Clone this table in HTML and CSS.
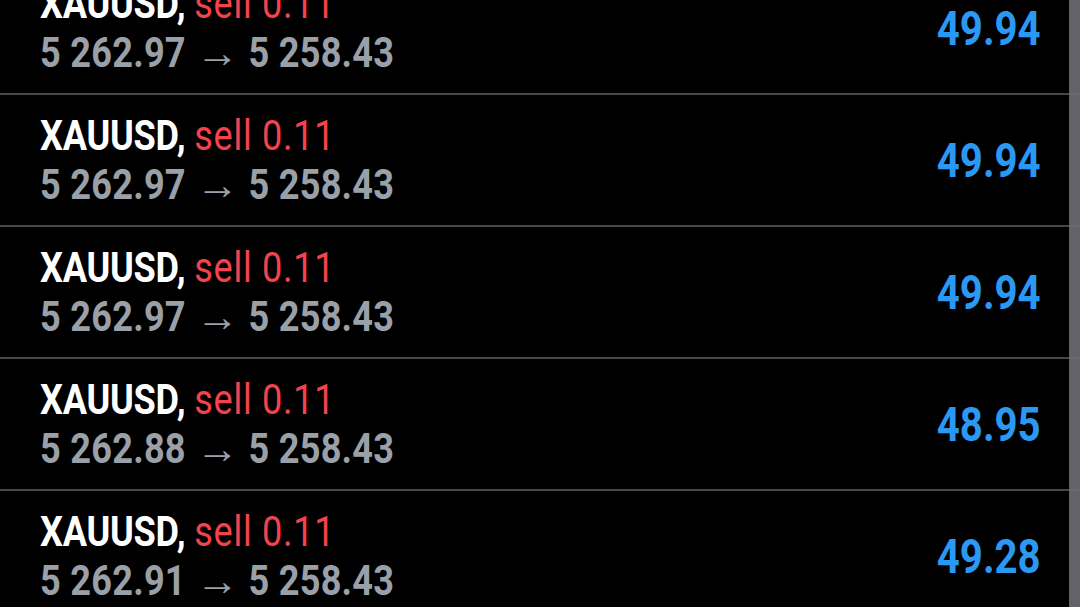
FILE: index.html
```html
<!DOCTYPE html>
<html>
<head>
<meta charset="utf-8">
<link rel="stylesheet" href="styles.css">
</head>
<body>
<div class="screen">
  <div class="list">
    <div class="row">
      <div class="info">
        <div class="line1"><span class="sym">XAUUSD,</span> <span class="side">sell 0.11</span></div>
        <div class="line2">5 262.97 <span class="arrow">→</span> 5 258.43</div>
      </div>
      <div class="profit">49.94</div>
    </div>
    <div class="row">
      <div class="info">
        <div class="line1"><span class="sym">XAUUSD,</span> <span class="side">sell 0.11</span></div>
        <div class="line2">5 262.97 <span class="arrow">→</span> 5 258.43</div>
      </div>
      <div class="profit">49.94</div>
    </div>
    <div class="row">
      <div class="info">
        <div class="line1"><span class="sym">XAUUSD,</span> <span class="side">sell 0.11</span></div>
        <div class="line2">5 262.97 <span class="arrow">→</span> 5 258.43</div>
      </div>
      <div class="profit">49.94</div>
    </div>
    <div class="row">
      <div class="info">
        <div class="line1"><span class="sym">XAUUSD,</span> <span class="side">sell 0.11</span></div>
        <div class="line2">5 262.88 <span class="arrow">→</span> 5 258.43</div>
      </div>
      <div class="profit">48.95</div>
    </div>
    <div class="row">
      <div class="info">
        <div class="line1"><span class="sym">XAUUSD,</span> <span class="side">sell 0.11</span></div>
        <div class="line2">5 262.91 <span class="arrow">→</span> 5 258.43</div>
      </div>
      <div class="profit">49.28</div>
    </div>
  </div>
  <div class="scrollbar"></div>
</div>
</body>
</html>
```
FILE: styles.css
```css
html, body {
  margin: 0;
  padding: 0;
  background: #000;
}
.screen {
  position: relative;
  width: 1080px;
  height: 607px;
  overflow: hidden;
  background: #000;
  font-family: Roboto, "Liberation Sans", sans-serif;
}
.list {
  margin-top: -37px;
}
.row {
  height: 130px;
  border-bottom: 2px solid #48484c;
  display: flex;
  align-items: center;
  justify-content: space-between;
  padding: 0 39px 0 40px;
}
.info {
  display: flex;
  flex-direction: column;
  transform: scaleX(0.86);
  transform-origin: left center;
  white-space: nowrap;
}
.line1, .line2 {
  font-size: 42px;
  line-height: 49px;
}
.sym {
  color: #fff;
  font-weight: 700;
  letter-spacing: -0.3px;
}
.side {
  color: #f2434e;
  font-weight: 400;
  letter-spacing: 0.8px;
}
.line2 {
  color: #9aa0a8;
  font-weight: 700;
  letter-spacing: 0.3px;
}
.arrow {
  display: inline-block;
  font-weight: 400;
  margin: 0 4px 0 5px;
  transform: scaleX(1.2);
}
.profit {
  color: #2b98f3;
  font-size: 49px;
  font-weight: 700;
  transform: scaleX(0.82);
  transform-origin: right center;
}
.scrollbar {
  position: absolute;
  top: 0;
  right: 0;
  width: 11px;
  height: 100%;
  background: rgba(112, 108, 116, 0.9);
}
```
